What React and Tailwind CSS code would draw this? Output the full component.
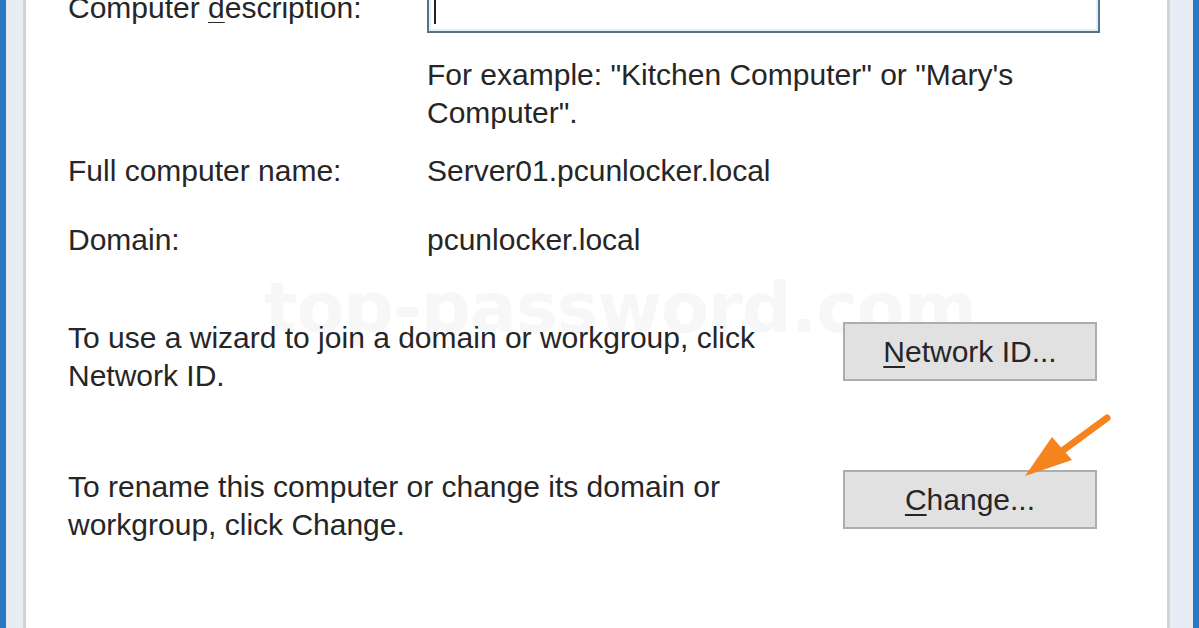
export default function App() {
  return (
    <div className="relative flex h-[628px] w-[1199px] overflow-hidden bg-white font-['Liberation_Sans',Arial,sans-serif] text-[30px] leading-[38px] text-[#262626]">
      <div className="pointer-events-none absolute left-[264px] top-[268px] font-['DejaVu_Sans',sans-serif] text-[70px] font-bold leading-[80px] tracking-[-1px] text-[#f7f7f7]">
        top-password.com
      </div>
      <div className="w-[6px] shrink-0 bg-[#2b7ac1]" />
      <div className="w-[17px] shrink-0 bg-[#e6edf5]" />
      <div className="w-[3px] shrink-0 bg-[#d3d3d3]" />
      <div className="relative mt-[-15px] flex flex-1 flex-col pl-[42px] pr-[67px]">
        <div className="flex items-start">
          <div className="mt-[4px] w-[359px] shrink-0">
            Computer <span className="underline decoration-1 underline-offset-4">d</span>escription:
          </div>
          <div className="relative h-[48px] w-[673px] shrink-0 border-2 border-[#56737f] bg-white shadow-[inset_0_0_0_2px_#dff3fa]">
            <div className="absolute left-[5px] top-[13px] h-[24px] w-[2px] bg-[#222]" />
          </div>
        </div>
        <div className="ml-[359px] mt-[23px]">
          For example: "Kitchen Computer" or "Mary's
          <br />
          Computer".
        </div>
        <div className="mt-[20px] flex">
          <div className="w-[359px] shrink-0">Full computer name:</div>
          <div>Server01.pcunlocker.local</div>
        </div>
        <div className="mt-[31px] flex">
          <div className="w-[359px] shrink-0">Domain:</div>
          <div>pcunlocker.local</div>
        </div>
        <div className="mt-[60px] flex items-start justify-between">
          <div>
            To use a wizard to join a domain or workgroup, click
            <br />
            Network ID.
          </div>
          <div className="mr-[3px] mt-[3px] flex h-[59px] w-[254px] shrink-0 items-center justify-center border-2 border-[#adadad] bg-[#e1e1e1]">
            <span>
              <span className="underline decoration-2 underline-offset-4">N</span>etwork ID...
            </span>
          </div>
        </div>
        <div className="mt-[73px] flex items-start justify-between">
          <div>
            To rename this computer or change its domain or
            <br />
            workgroup, click Change.
          </div>
          <div className="mr-[3px] mt-[2px] flex h-[59px] w-[254px] shrink-0 items-center justify-center border-2 border-[#adadad] bg-[#e1e1e1]">
            <span>
              <span className="underline decoration-2 underline-offset-4">C</span>hange...
            </span>
          </div>
        </div>
      </div>
      <div className="w-[3px] shrink-0 bg-[#d3d3d3]" />
      <div className="w-[23px] shrink-0 bg-[#e6edf5]" />
      <div className="w-[6px] shrink-0 bg-[#2b7ac1]" />

      <svg className="pointer-events-none absolute left-[1010px] top-[405px]" width="110" height="80" viewBox="0 0 110 80">
        <line x1="97" y1="13" x2="52" y2="46" stroke="#f5841f" strokeWidth="7" strokeLinecap="round" />
        <polygon points="15,71 42,32 62,55" fill="#f5841f" />
      </svg>
    </div>
  );
}
